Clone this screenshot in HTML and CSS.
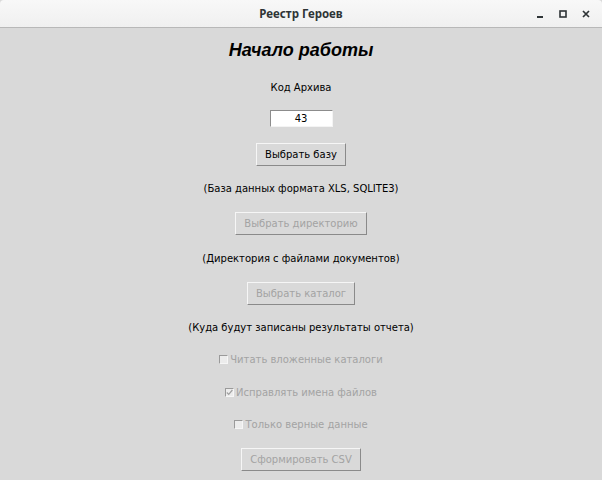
FILE: index.html
```html
<!DOCTYPE html>
<html lang="ru">
<head>
<meta charset="utf-8">
<title>Реестр Героев</title>
<link rel="stylesheet" href="styles.css">
</head>
<body>
<div class="window">
  <header class="titlebar">
    <span class="title">Реестр Героев</span>
    <div class="controls">
      <svg class="ctl" width="10" height="10" viewBox="0 0 10 10"><rect x="2" y="7" width="6" height="2" fill="#2e3436"/></svg>
      <svg class="ctl" width="10" height="10" viewBox="0 0 10 10"><rect x="2" y="2" width="6" height="6" fill="none" stroke="#2e3436" stroke-width="1.6"/></svg>
      <svg class="ctl" width="10" height="10" viewBox="0 0 10 10"><path d="M2 2 L8 8 M8 2 L2 8" stroke="#2e3436" stroke-width="1.7"/></svg>
    </div>
  </header>
  <main class="content">
    <h1 class="heading">Начало работы</h1>
    <div class="label r-label1">Код Архива</div>
    <div class="entry">43</div>
    <div class="btn r-btn1">Выбрать базу</div>
    <div class="label r-label2">(База данных формата XLS, SQLITE3)</div>
    <div class="btn disabled r-btn2">Выбрать директорию</div>
    <div class="label r-label3">(Директория с файлами документов)</div>
    <div class="btn disabled r-btn3">Выбрать каталог</div>
    <div class="label r-label4">(Куда будут записаны результаты отчета)</div>
    <div class="check r-cb1"><span class="box"></span>Читать вложенные каталоги</div>
    <div class="check r-cb2"><span class="box"><svg width="9" height="9" viewBox="0 0 9 9"><path d="M1.8 4.5 L3.7 6.4 L7.4 2" fill="none" stroke="#a0a0a0" stroke-width="1.2"/></svg></span>Исправлять имена файлов</div>
    <div class="check r-cb3"><span class="box"></span>Только верные данные</div>
    <div class="btn disabled r-btn4">Сформировать CSV</div>
  </main>
</div>
</body>
</html>
```
FILE: styles.css
```css
html, body {
  margin: 0;
  padding: 0;
}
body {
  width: 602px;
  height: 480px;
  overflow: hidden;
  background: #d9d9d9;
  font-family: "DejaVu Sans", "Noto Sans", sans-serif;
  font-size: 10px;
  color: #000;
}
.window {
  display: flex;
  flex-direction: column;
  height: 480px;
}
.titlebar {
  height: 27px;
  border-bottom: 1px solid #b8b8b8;
  background: linear-gradient(#f8f8f8, #f0f0f0);
  border-radius: 4px 4px 0 0;
  display: flex;
  align-items: center;
  justify-content: center;
  position: relative;
}
.title {
  font-family: "Noto Sans", "DejaVu Sans", sans-serif;
  font-weight: bold;
  font-size: 11.5px;
  color: #2e3436;
}
.controls {
  position: absolute;
  right: 11px;
  top: 9px;
  display: flex;
  gap: 13px;
}
.ctl {
  display: block;
}
.content {
  display: flex;
  flex-direction: column;
  align-items: center;
}
.heading {
  margin: 8px 0 0;
  font-family: "Liberation Sans", Arial, sans-serif;
  font-style: italic;
  font-weight: bold;
  font-size: 18px;
  line-height: 28px;
}
.label {
  line-height: 17px;
  margin-top: 14px;
}
.r-label1 { margin-top: 15px; }
.r-label3 { margin-top: 15px; }
.entry {
  margin-top: 14px;
  box-sizing: border-box;
  width: 63px;
  height: 17px;
  background: #fff;
  border-top: 1px solid #8c8c8c;
  border-left: 1px solid #8c8c8c;
  border-bottom: 1px solid #f4f4f4;
  border-right: 1px solid #f4f4f4;
  text-align: center;
  line-height: 15px;
}
.btn {
  margin-top: 15px;
  box-sizing: border-box;
  height: 23px;
  padding: 0 8px;
  line-height: 21px;
  border-top: 1px solid #f6f6f6;
  border-left: 1px solid #f6f6f6;
  border-bottom: 1px solid #8a8a8a;
  border-right: 1px solid #8a8a8a;
  background: #d9d9d9;
}
.r-btn1 { margin-top: 16px; }
.r-btn3 { margin-top: 15px; }
.disabled {
  color: #a3a3a3;
}
.check {
  margin-top: 15px;
  line-height: 17px;
  color: #a3a3a3;
  display: flex;
  align-items: center;
}
.r-cb2 { margin-top: 16px; }
.box {
  box-sizing: border-box;
  width: 9px;
  height: 9px;
  margin-right: 2px;
  background: #ececec;
  border-top: 1px solid #9a9a9a;
  border-left: 1px solid #9a9a9a;
  border-bottom: 1px solid #f6f6f6;
  border-right: 1px solid #f6f6f6;
  position: relative;
}
.box svg {
  position: absolute;
  left: -1px;
  top: -1px;
}
```
